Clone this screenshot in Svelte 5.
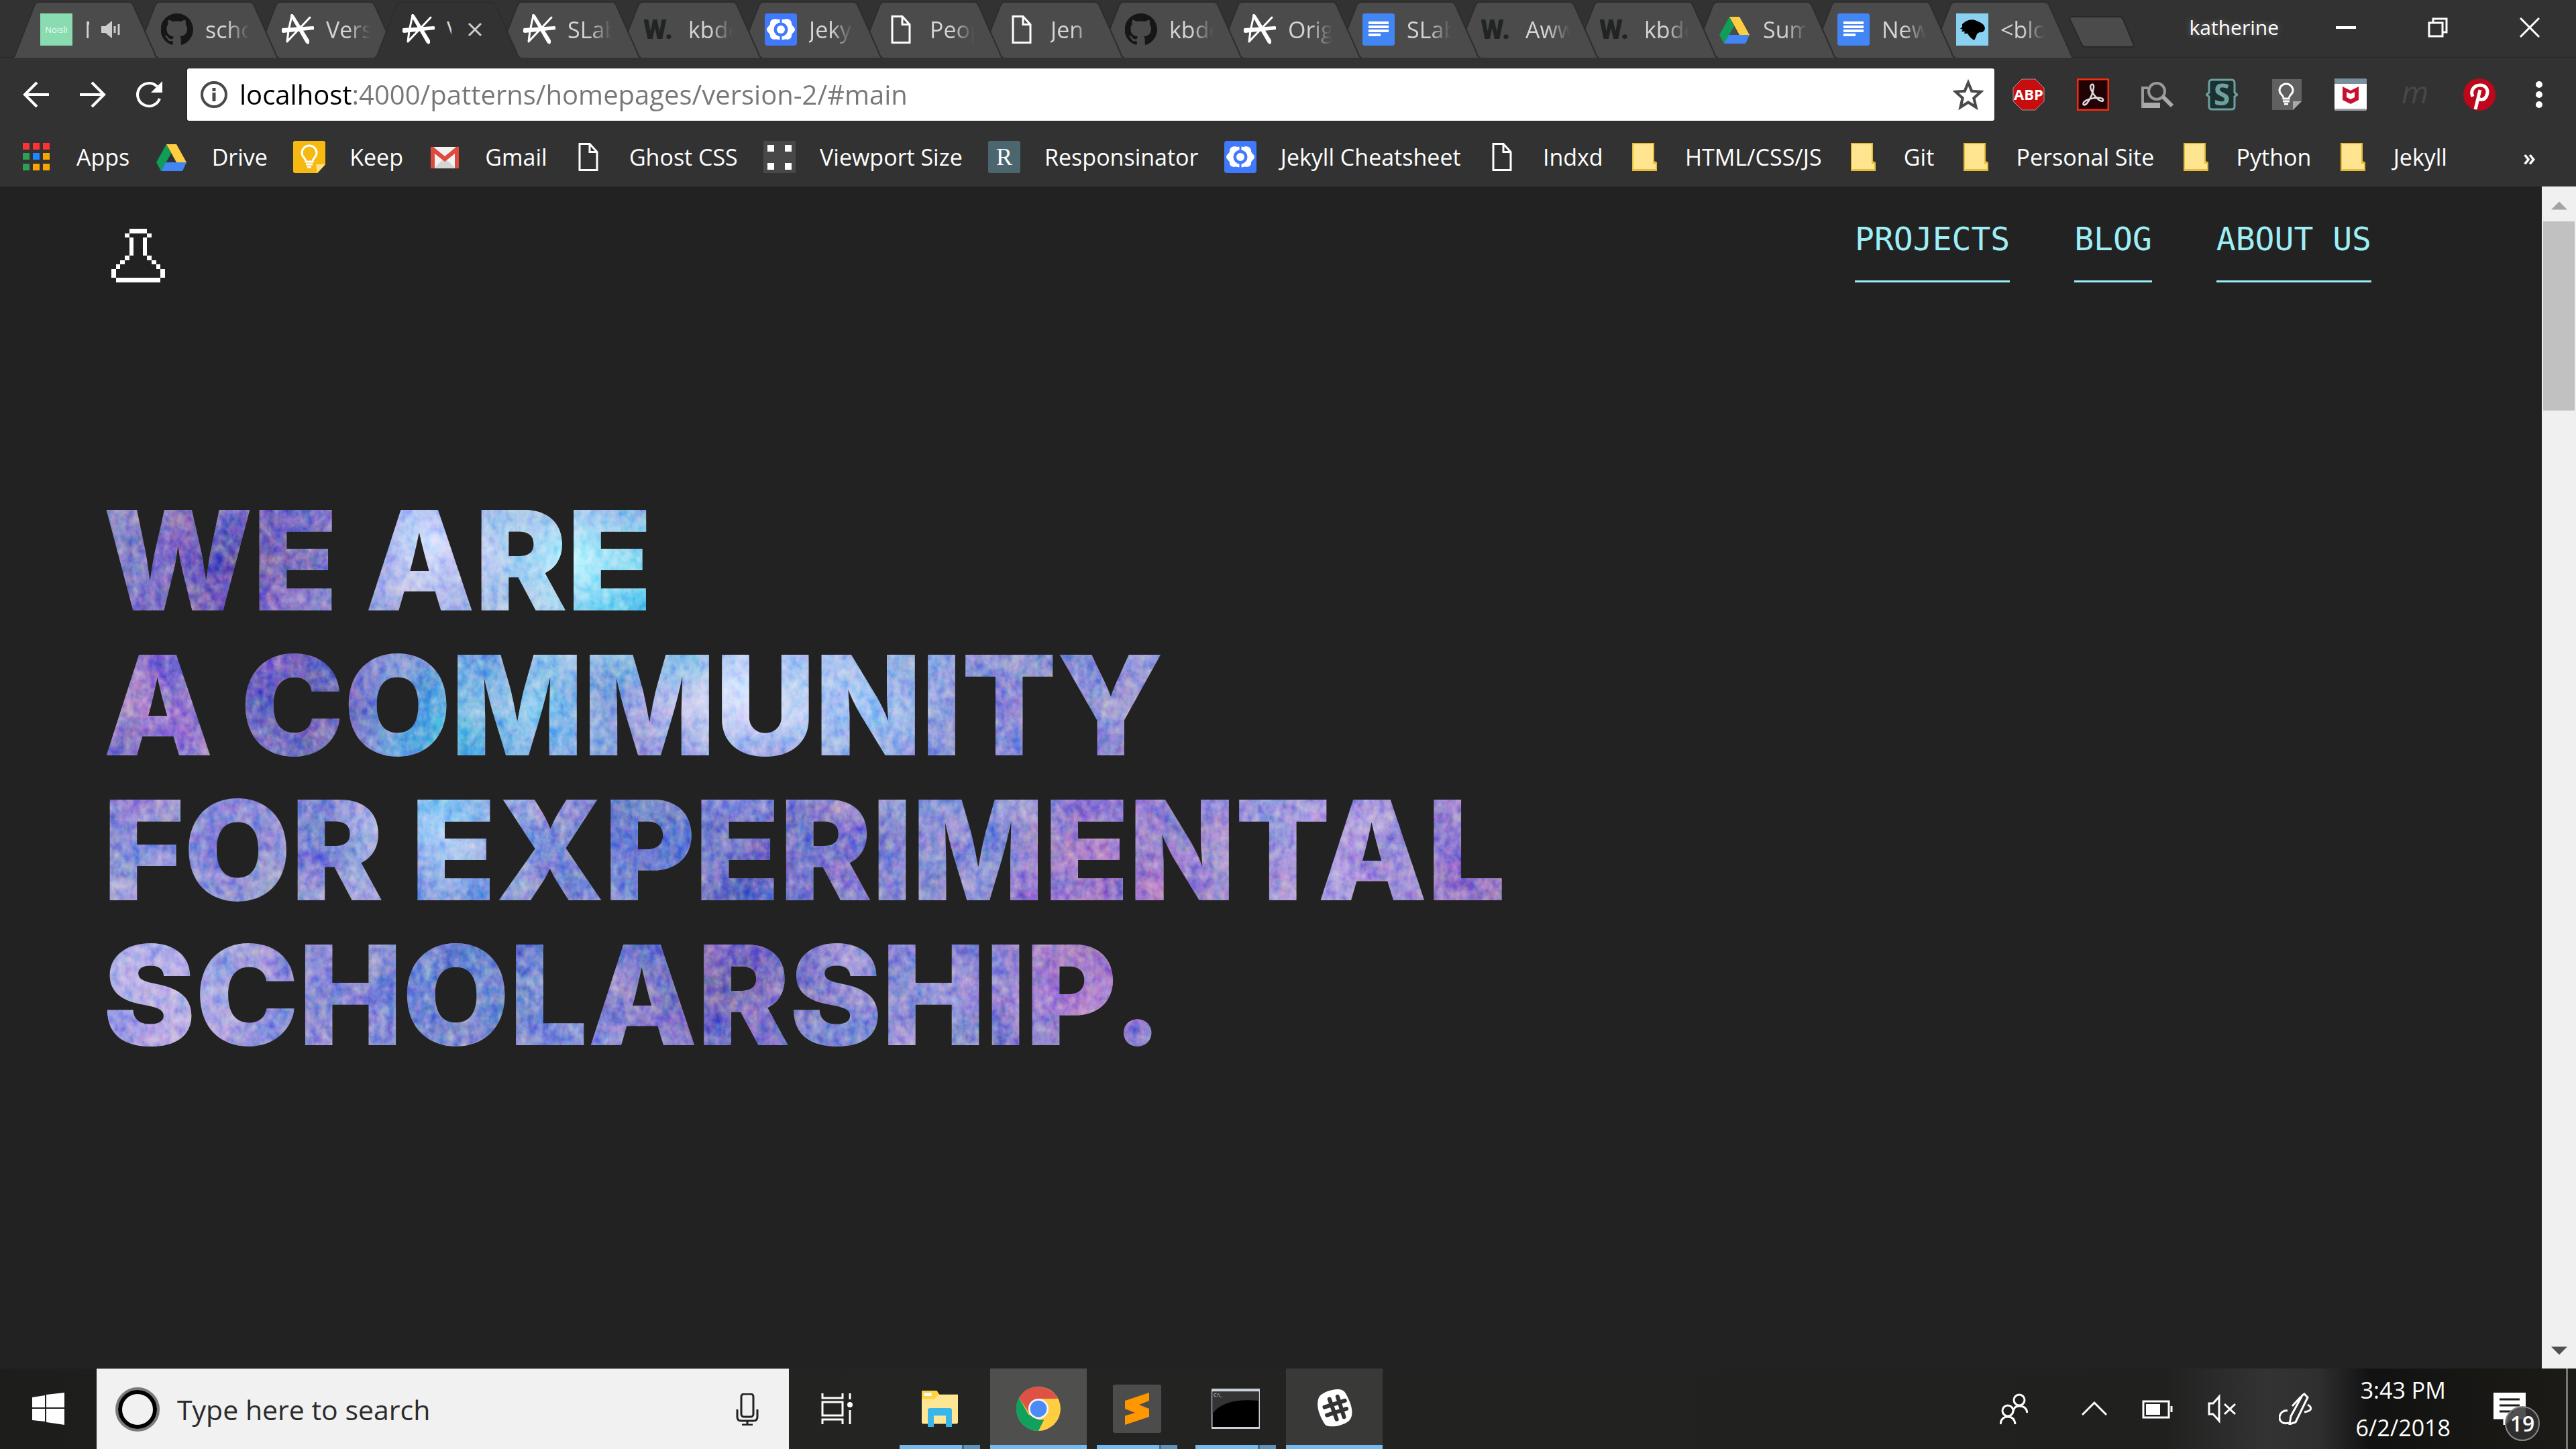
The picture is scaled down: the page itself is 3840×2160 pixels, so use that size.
<script>
  const tabs = [
    { icon: 'noisli', title: 'Noisli', audio: true },
    { icon: 'github', title: 'scholarslab' },
    { icon: 'star', title: 'Version 1' },
    { icon: 'star', title: 'Version 2', active: true },
    { icon: 'star', title: 'SLab' },
    { icon: 'w', title: 'kbdesign' },
    { icon: 'jekyll', title: 'Jekyll' },
    { icon: 'page', title: 'People' },
    { icon: 'page', title: 'Jen' },
    { icon: 'github', title: 'kbdesign' },
    { icon: 'star', title: 'Original' },
    { icon: 'docs', title: 'SLab' },
    { icon: 'w', title: 'Awwwards' },
    { icon: 'w', title: 'kbdesign' },
    { icon: 'drive', title: 'Summer' },
    { icon: 'docs', title: 'New' },
    { icon: 'lion', title: '<blockquote>' }
  ];
  const bookmarks = [
    ['apps', 'Apps'], ['drive', 'Drive'], ['keep', 'Keep'], ['gmail', 'Gmail'],
    ['page', 'Ghost CSS'], ['viewport', 'Viewport Size'], ['r', 'Responsinator'],
    ['jekyll', 'Jekyll Cheatsheet'], ['page', 'Indxd'], ['folder', 'HTML/CSS/JS'],
    ['folder', 'Git'], ['folder', 'Personal Site'], ['folder', 'Python'], ['folder', 'Jekyll']
  ];
  const extensions = [
    ['abp', 'Adblock Plus'], ['acrobat', 'Adobe Acrobat'], ['inspect', 'Page search'],
    ['stylish', 'Stylish'], ['keepgrey', 'Save to Keep'], ['mcafee', 'McAfee'],
    ['m', 'Momentum'], ['pinterest', 'Pinterest']
  ];
  const apps = [
    { icon: 'explorer', name: 'File Explorer', multi: true },
    { icon: 'chrome', name: 'Google Chrome', state: 'focused' },
    { icon: 'sublime', name: 'Sublime Text', multi: true },
    { icon: 'terminal', name: 'Command Prompt', multi: true },
    { icon: 'slack', name: 'Slack', state: 'lit' }
  ];
  const flask = [
    [4, 0, 4, 1], [3, 1, 1, 1], [8, 1, 1, 1], [4, 2, 1, 4], [7, 2, 1, 4], [3, 6, 1, 1], [8, 6, 1, 1],
    [2, 7, 1, 1], [9, 7, 1, 1], [1, 8, 1, 1], [10, 8, 1, 1], [0, 9, 1, 2], [11, 9, 1, 2], [1, 11, 10, 1]
  ];
  let address = $state('localhost:4000/patterns/homepages/version-2/#main');
  let query = $state('');
</script>

{#snippet icon(name)}
  <svg class="icon" viewBox="0 0 48 48" aria-hidden="true">
    {#if name === 'noisli'}
      <rect width="48" height="48" fill="#8adbb0" />
      <text x="24" y="29" text-anchor="middle" font-size="13" fill="#e4fff2">Noisli</text>
    {:else if name === 'github'}
      <path fill="#161616" d="M24 0a24 24 0 0 0-8 46.800c1.200.2 1.700-.5 1.700-1.200v-4.500c-6.700 1.500-8.100-2.900-8.100-2.900-1.100-2.800-2.700-3.500-2.700-3.500-2.200-1.500.2-1.500.2-1.500 2.400.2 3.700 2.500 3.700 2.500 2.100 3.700 5.600 2.600 7 2 .2-1.600.8-2.600 1.500-3.200-5.300-.6-10.900-2.700-10.900-11.900 0-2.600.9-4.800 2.500-6.500-.3-.6-1.100-3 .2-6.300 0 0 2-.7 6.600 2.500a23 23 0 0 1 12 0c4.600-3.200 6.600-2.500 6.600-2.500 1.300 3.300.5 5.700.2 6.300 1.500 1.700 2.500 3.900 2.500 6.500 0 9.200-5.600 11.200-11 11.800.9.800 1.700 2.300 1.700 4.500v6.700c0 .7.400 1.400 1.700 1.200A24 24 0 0 0 24 0z" />
    {:else if name === 'star'}
      <path fill="#fff" d="M0 23l1-1 46-3 1 1v4l-46 5-2-1z" />
      <path fill="#fff" d="M13 3l1-2h2l2 2 23 37 0 4-2 2-3-2L14 6z" />
      <path fill="none" stroke="#fff" stroke-width="3" stroke-linecap="round" stroke-linejoin="round" d="M42 6L8 42l2-16 5-23" />
    {:else if name === 'w'}
      <text x="-1" y="38" font-family="Roboto, sans-serif" font-size="40" font-weight="900" fill="#202423">W.</text>
    {:else if name === 'jekyll'}
      <rect width="48" height="48" rx="4" fill="#4079fb" />
      <path fill="#fff" d="M20 9c-7-2-12 1-12 6 0 4-5 5-5 9s5 5 5 9c0 5 5 7 12 5-5-3-8-9-8-14s3-12 8-15zm8 0c7-2 12 1 12 6 0 4 5 5 5 9s-5 5-5 9c0 5-5 7-12 5 5-3 8-9 8-14s-3-12-8-15z" />
      <circle cx="24" cy="24" r="13" fill="none" stroke="#fff" stroke-width="5" />
      <path stroke="#4079fb" stroke-width="3" d="M24 8v9m0 14v9" />
      <circle cx="24" cy="24" r="6" fill="#fff" />
    {:else if name === 'page'}
      <path fill="none" stroke="#fff" stroke-width="3" d="M10 4.500h15l11 12v27H10zM25 4.500v12h11" />
    {:else if name === 'docs'}
      <path fill="#4285f4" d="M2 0h44l2 2v44l-2 2H2l-2-2V2z" />
      <path stroke="#fff" stroke-width="4" d="M9 14h30M9 20h30M9 26h30M9 32h18" />
    {:else if name === 'drive'}
      <path fill="#0f9d58" d="M16 5l7 14L8 45 1 32z" />
      <path fill="#ffcd40" d="M16 5h15l15 27H31z" />
      <path fill="#4285f4" d="M15 32h31l-6 13H8z" />
    {:else if name === 'lion'}
      <rect width="48" height="48" fill="#8ad0f0" />
      <path d="M9 16l5-4q7-4 14-2l7 3q7 3 8 9-1 7-8 6-5 2-5 6l-3 6q-6-3-10-10l-5 0 1-3-5 0 2-3-4-1 3-3z" />
    {:else if name === 'apps'}
      <path fill="#f33" d="M4 3h10v10H4zm15 0h10v10H19zm15 0h10v10H34z" />
      <path fill="#2f9e57" d="M4 18h10v10H4zm0 16h10v10H4z" />
      <path fill="#1e88ff" d="M19 18h10v10H19z" />
      <path fill="#f9a602" d="M34 18h10v10H34zM19 34h10v10H19zm15 0h10v10H34z" />
    {:else if name === 'keep'}
      <path fill="#f5b912" d="M2 0h44l2 2v33L36 48H2l-2-2V2z" />
      <path fill="#ffe083" d="M34 35h14L36 48z" />
      <path fill="none" stroke="#fff" stroke-width="3" d="M19 31c0-6-6-6-6-13a11 11 0 0 1 22 0c0 7-6 7-6 13zM19 35h10m-8 4h6" />
    {:else if name === 'gmail'}
      <rect x="3" y="9" width="42" height="32" rx="2" fill="#f2f2f2" />
      <path fill="#d5d5d5" d="M8 41l16-16 16 16z" />
      <path fill="#dd4b3e" d="M3 11q0-3 4-2l17 14L41 9q4-1 4 2v28q0 2-2 2h-4V19L24 31 9 19v22H5q-2 0-2-2z" />
    {:else if name === 'viewport'}
      <rect width="48" height="48" fill="#484848" />
      <path fill="#fff" d="M6 6h10v10H6zm26 0h10v10H32zM6 33h10v10H6zm26 0h10v10H32z" />
    {:else if name === 'r'}
      <rect width="48" height="48" rx="3" fill="#4b666e" />
      <text x="24" y="36" text-anchor="middle" font-family="Liberation Serif, serif" font-size="36" fill="#fff">R</text>
    {:else if name === 'folder'}
      <path fill="#e5bd3a" d="M5 3h33v27l4 2v13H5z" />
      <path fill="#ffe590" d="M7 5h29v37H7zM36 34h4v8h-4z" />
    {:else if name === 'abp'}
      <path fill="#c70d0d" stroke="#999" d="M14 1h20l13 13v20L34 47H14L1 34V14z" />
      <text x="24" y="32" text-anchor="middle" font-size="22" font-weight="700" fill="#fff">ABP</text>
    {:else if name === 'acrobat'}
      <rect x="1" y="1" width="46" height="46" fill="#230206" stroke="#fa2b0c" stroke-width="3" />
      <path fill="none" stroke="#ddd" stroke-width="2.500" d="M22 9c5-2 3 8 0 16-4 9-9 16-12 14-3-4 7-9 16-10 8-1 14 0 13 4-3 3-9-3-13-8-5-7-8-14-4-16z" />
    {:else if name === 'inspect'}
      <path fill="none" stroke="#999" stroke-width="4" d="M10 14H2v28h24" />
      <path fill="#aaa" d="M2 36h26v8H2z" />
      <circle cx="23" cy="19" r="12" fill="#333" stroke="#999" stroke-width="4" />
      <path stroke="#aaa" stroke-width="6" d="M32 27l14 14" />
    {:else if name === 'stylish'}
      <path fill="#1c302f" stroke="#6fa09f" stroke-width="3" d="M9 2h30q4 0 4 5v14l4 3-4 3v14q0 5-4 5H9q-4 0-4-5V27l-4-3 4-3V7q0-5 4-5z" />
      <text x="24" y="40" text-anchor="middle" font-size="44" font-weight="700" fill="#6fa09f">S</text>
    {:else if name === 'keepgrey'}
      <path fill="#606060" d="M3 1h44v33L34 47H3z" />
      <path fill="#aaa" d="M34 34h13L34 47z" />
      <path fill="none" stroke="#fff" stroke-width="3" d="M20 30c0-6-6-6-6-12a10 10 0 0 1 20 0c0 6-6 6-6 12zM19 34h10m-8 4h6" />
    {:else if name === 'mcafee'}
      <rect width="48" height="48" rx="3" fill="#fff" />
      <path fill="#78909c" d="M2 0h44l2 2v6H0V2z" />
      <path fill="#9a9da3" d="M0 45h48l-2 3H2z" />
      <path fill="#c8102e" d="M12 12l12 6 12-6v20l-12 6-12-6zm6 8v8l6 3 6-3v-8l-6 3z" />
    {:else if name === 'm'}
      <text x="24" y="37" text-anchor="middle" font-size="46" font-style="italic" fill="#484848">m</text>
    {:else if name === 'pinterest'}
      <circle cx="24" cy="24" r="24" fill="#bd081c" />
      <path fill="none" stroke="#fff" stroke-width="5" d="M14 27c-4-9 2-17 11-17s13 7 10 15c-3 8-11 8-13 3" />
      <path stroke="#fff" stroke-width="5" d="M25 17l-7 29" />
    {:else if name === 'explorer'}
      <path fill="#fed242" d="M0 0h20l4 6v11H0z" />
      <path fill="#ffe694" d="M0 11h17l5-6h26v37q0 2-2 2H2q-2 0-2-2z" />
      <path fill="#fff" d="M3 3h10v4H3z" />
      <path fill="#38b6ea" d="M8 48V26q0-3 3-3h26q3 0 3 3v22h-8V33H16v15z" />
    {:else if name === 'chrome'}
      <circle cx="24" cy="24" r="24" fill="#ffcd40" />
      <path fill="#12a05d" d="M24 48A24 24 0 0 1 3 12l10 18 11 6h6z" />
      <path fill="#de5246" d="M3 12a24 24 0 0 1 42 1H24l-10 16z" />
      <circle cx="24" cy="24" r="11" fill="#f4f4f4" />
      <circle cx="24" cy="24" r="9" fill="#4c8bf5" />
    {:else if name === 'sublime'}
      <rect width="48" height="48" rx="2" fill="#4c4c4c" />
      <path fill="#ff9800" d="M36 8v8l-10 4 10 4v8L12 40v-9l10-3-10-4v-8z" />
    {:else if name === 'terminal'}
      <path fill="#c9d0d8" d="M0 4h48v40H0z" />
      <path d="M1 7h46v35H1z" />
      <path fill="#343434" d="M1 7h46v9Q12 13 1 29z" />
      <text x="2" y="12" font-size="5" fill="#ddd">C:\_</text>
    {:else if name === 'slack'}
      <path fill="#fff" d="M14 3q19-7 24 2c8 14 11 27 4 34-8 6-22 9-29 5C5 32 1 20 5 10q2-4 9-7z" />
      <path stroke="#333" stroke-width="5" stroke-linecap="round" d="M18 12l9 25M28 9l8 25M12 22l25-8M15 32l24-8" />
    {/if}
  </svg>
{/snippet}

<div class="window">
  <header class="chrome">
    <div class="strip">
      <div class="tabs" role="tablist">
        {#each tabs as tab, i}
          <button
            class="tab"
            class:active={tab.active}
            role="tab"
            aria-selected={!!tab.active}
            style:z-index={tab.active ? tabs.length + 1 : tabs.length - i}
          >
            <svg class="shape" viewBox="0 0 218 84" preserveAspectRatio="none" aria-hidden="true">
              <path d="M0 84q4 0 6-8L33 7q2-6 8-6h132q6 0 8 6l31 69q2 8 6 8" />
            </svg>
            {@render icon(tab.icon)}
            <span class="title" class:tiny={tab.audio || tab.active}>{tab.title}</span>
            {#if tab.audio}
              <svg class="mark" viewBox="0 0 28 28" aria-hidden="true">
                <path fill="#ccc" d="M0 9h6l10-8v26L6 19H0z" />
                <path stroke="#ccc" stroke-width="3" d="M20 9v10M26 6v16" />
              </svg>
            {:else if tab.active}
              <svg class="cross" viewBox="0 0 22 22" aria-hidden="true">
                <path stroke="#ccc" stroke-width="3" d="M2 2l18 18M20 2L2 20" />
              </svg>
            {/if}
          </button>
        {/each}
      </div>
      <button class="newtab" aria-label="New tab">
        <svg viewBox="0 0 100 48" aria-hidden="true">
          <path fill="#4b4b4b" stroke="#282828" stroke-width="2" d="M4 1h72q5 0 7 5l15 36q2 5-3 5H26q-5 0-7-5L2 6Q0 1 4 1z" />
        </svg>
      </button>
      <div class="controls">
        <button class="user">katherine</button>
        <button class="ctl" aria-label="Minimize"><svg viewBox="0 0 30 30"><path d="M0 15h30" stroke-width="4" /></svg></button>
        <button class="ctl" aria-label="Restore"><svg viewBox="0 0 30 30"><path d="M2 8h20v20H2zM8 8V2h20v20h-6" stroke-width="3" /></svg></button>
        <button class="ctl" aria-label="Close"><svg viewBox="0 0 30 30"><path d="M1 1l28 28M29 1L1 29" stroke-width="3" /></svg></button>
      </div>
    </div>

    <div class="toolbar">
      <button class="nav" aria-label="Back"><svg viewBox="0 0 40 40"><path d="M39 20H3M21 2L3 20l18 18" /></svg></button>
      <button class="nav" aria-label="Forward"><svg viewBox="0 0 40 40"><path d="M1 20h36M19 2l18 18-18 18" /></svg></button>
      <button class="nav" aria-label="Reload"><svg viewBox="0 0 40 40"><path d="M36 26A17 17 0 1 1 32 8" /><path class="solid" d="M40 0v17H23z" /></svg></button>
      <div class="omnibox">
        <button class="inbox" aria-label="Site information">
          <svg viewBox="0 0 40 40"><circle cx="20" cy="20" r="18" fill="none" stroke="#4a4a4a" stroke-width="4" /><path stroke="#4a4a4a" stroke-width="5" d="M20 17v13M20 10v5" /></svg>
        </button>
        <input class="address" aria-label="Address" bind:value={address} />
        <button class="inbox" aria-label="Bookmark this page">
          <svg class="fav" viewBox="0 0 44 44"><path fill="none" stroke="#4a4a4a" stroke-width="4" d="M22 5l5 12 13 1-10 9 3 13-11-7-11 7 3-13-10-9 13-1z" /></svg>
        </button>
      </div>
      <div class="extensions">
        {#each extensions as [name, label]}
          <button aria-label={label}>{@render icon(name)}</button>
        {/each}
      </div>
      <button class="menu" aria-label="Menu"><svg viewBox="0 0 10 40"><circle cx="5" cy="5" r="5" /><circle cx="5" cy="20" r="5" /><circle cx="5" cy="35" r="5" /></svg></button>
    </div>

    <nav class="bookmarks" aria-label="Bookmarks">
      <div class="links">
        {#each bookmarks as [name, label]}
          <a href="#main">{@render icon(name)}<span>{label}</span></a>
        {/each}
      </div>
      <button class="more" aria-label="More bookmarks">»</button>
    </nav>
  </header>

  <div class="viewport">
    <main id="main">
      <div class="top">
        <a class="logo" href="#main" aria-label="Home">
          <svg viewBox="0 0 12 12" shape-rendering="crispEdges">
            {#each flask as [x, y, w, h]}
              <rect {x} {y} width={w} height={h} fill="#fff" />
            {/each}
          </svg>
        </a>
        <nav class="site" aria-label="Site">
          <a href="#projects">PROJECTS</a>
          <a href="#blog">BLOG</a>
          <a href="#about">ABOUT US</a>
        </nav>
      </div>
      <h1>WE ARE<br />A COMMUNITY<br />FOR EXPERIMENTAL<br />SCHOLARSHIP.</h1>
    </main>
    <div class="scroll" aria-hidden="true">
      <svg viewBox="0 0 24 12"><path fill="#a3a3a3" d="M12 0l12 12H0z" /></svg>
      <div class="track"><div class="thumb"></div></div>
      <svg viewBox="0 0 24 12"><path fill="#505050" d="M0 0h24L12 12z" /></svg>
    </div>
  </div>

  <footer class="taskbar">
    <button class="start" aria-label="Start">
      <svg viewBox="0 0 48 48"><path fill="#fff" d="M0 7l19-3v18H0zM21 3l27-3v22H21zM0 24h19v19L0 41zM21 24h27v24l-27-4z" /></svg>
    </button>
    <label class="search">
      <svg class="cortana" viewBox="0 0 66 66" aria-hidden="true"><circle cx="33" cy="33" r="31" fill="none" stroke="#7a7a7a" stroke-width="4" /><circle cx="33" cy="33" r="26" fill="none" stroke="#000" stroke-width="6" /></svg>
      <input placeholder="Type here to search" aria-label="Type here to search" bind:value={query} />
      <svg class="mic" viewBox="0 0 34 48" aria-hidden="true"><rect x="8" y="1" width="18" height="34" rx="4" /><path d="M2 24v11q0 6 6 6h18q6 0 6-6V24M17 41v6M9 47h16" /></svg>
    </label>
    <button class="view" aria-label="Task view">
      <svg viewBox="0 0 48 46"><path d="M2 0v7h30V0M2 13h30v20H2zM2 46v-7h30v7M43 0v9M43 25v21" /><circle cx="43" cy="17" r="4" fill="#fff" stroke="none" /></svg>
    </button>
    <div class="apps">
      {#each apps as app}
        <button class="app {app.state ?? ''} {app.icon}" class:multi={app.multi} aria-label={app.name}>{@render icon(app.icon)}</button>
      {/each}
    </div>
    <div class="tray">
      <button aria-label="People"><svg class="w42" viewBox="0 0 42 48"><circle cx="29" cy="11" r="8" /><path d="M20 28q1-8 9-8 11 0 12 10" /><circle cx="12" cy="27" r="8" /><path d="M1 47q1-11 11-11t11 11" /></svg></button>
      <button aria-label="Hidden icons"><svg class="w38" viewBox="0 0 38 48"><path d="M1 33l18-18 18 18" /></svg></button>
      <button aria-label="Battery"><svg class="w46" viewBox="0 0 46 48"><path d="M2 13h38v24H2zM44 20v9" /><path class="fill" d="M6 17h21v16H6z" /></svg></button>
      <button aria-label="Volume muted"><svg class="w42" viewBox="0 0 42 48"><path d="M2 16h6l9-10v36L8 32H2zM25 17l16 15M41 17L25 32" /></svg></button>
      <button aria-label="Pen workspace"><svg class="w50" viewBox="0 0 50 48"><path d="M15 45c-12 3-17-6-12-14q4-5 10-4M38 2l5 5-18 37-9 3 2-12 17-31zM20 20L33 6M43 18c7 4 7 9-5 11" /></svg></button>
      <button class="clock"><span>3:43 PM</span><span>6/2/2018</span></button>
      <button class="notes" aria-label="19 notifications">
        <svg viewBox="0 0 48 48"><path fill="#fff" d="M0 0h48v38H26L16 48V38H0z" /><path stroke="#1b1b19" stroke-width="3" d="M9 10h30M9 19h30M9 28h20" /></svg>
        <span class="badge">19</span>
      </button>
    </div>
  </footer>

  <svg class="defs" aria-hidden="true">
    <filter id="felt" x="0" y="0" width="100%" height="100%" color-interpolation-filters="sRGB">
      <feTurbulence type="fractalNoise" baseFrequency="0.014" numOctaves="2" seed="8" result="wide" />
      <feColorMatrix in="wide" type="matrix" values="0.900 0 0 0 0.080  0.500 0.400 0 0 0.060  0 0 0.400 0 0.280  0 0 0 0 1" result="clouds" />
      <feTurbulence type="fractalNoise" baseFrequency="0.09 0.07" numOctaves="4" seed="3" result="fine" />
      <feColorMatrix in="fine" type="matrix" values="1.100 0 0 0 0  0.700 0.500 0 0 -0.050  0 0 0.600 0 0.170  0 0 0 0 1" result="grain" />
      <feBlend in="clouds" in2="SourceGraphic" mode="soft-light" result="a" />
      <feBlend in="grain" in2="a" mode="soft-light" result="b" />
      <feComposite in="b" in2="SourceGraphic" operator="in" />
    </filter>
  </svg>
</div>

<style>
  :global(body) { margin: 0; background: #222; }
  .window { display: flex; flex-direction: column; min-height: 100vh; font: 34px/48px 'Open Sans', 'Noto Sans', sans-serif; color: #fff; }
  button { padding: 0; border: 0; background: none; color: inherit; font: inherit; display: flex; align-items: center; justify-content: center; }
  a { color: inherit; text-decoration: none; }
  svg { display: block; flex: none; }
  .icon { width: 48px; height: 48px; }

  .chrome { background: #323232; }
  .strip { display: flex; align-items: flex-end; height: 86px; box-shadow: inset 0 -1px #262626; }
  .tabs { display: flex; padding-left: 18px; isolation: isolate; }
  .tab { position: relative; justify-content: flex-start; width: 218px; height: 84px; margin-right: -38px; padding: 0 42px; text-align: left; color: #d4d4d4; isolation: isolate; }
  .tab:nth-child(n + 9) { margin-right: -41px; }
  .shape { position: absolute; inset: 0; width: 100%; height: 100%; z-index: -1; fill: #4b4b4b; stroke: #2d2d2d; stroke-width: 2; }
  .active .shape { fill: #323232; }
  .title { flex: none; width: 66px; margin-left: 18px; overflow: hidden; white-space: nowrap; mask-image: linear-gradient(90deg, #000 50%, transparent); }
  .title.tiny { width: 7px; mask-image: none; }
  .mark { width: 28px; height: 28px; margin-left: 18px; }
  .cross { width: 22px; height: 22px; margin-left: 24px; }
  .newtab { align-self: center; margin-left: 33px; padding-top: 8px; }
  .newtab svg { width: 98px; height: 47px; }
  .controls { display: flex; align-items: center; align-self: stretch; margin-left: auto; padding: 0 54px 4px 0; }
  .user { margin-right: 85px; font-size: 30px; text-shadow: 0 0 8px #777; }
  .ctl { width: 30px; margin-left: 107px; }
  .user + .ctl { margin-left: 0; }
  .ctl svg { width: 30px; height: 30px; fill: none; stroke: #fff; }

  .toolbar { display: flex; align-items: center; padding: 16px 50px 0 34px; }
  .nav { margin-right: 44px; }
  .nav svg { width: 40px; height: 40px; fill: none; stroke: #fff; stroke-width: 4; }
  .nav .solid { fill: #fff; stroke: none; }
  .omnibox { display: flex; align-items: center; flex: 1; height: 78px; margin-left: -7px; padding: 0 16px 0 20px; background: #fff; border-radius: 3px; box-shadow: 0 0 0 1px #222; }
  .inbox svg { width: 40px; height: 40px; }
  .inbox .fav { width: 46px; height: 46px; }
  .address { flex: 1; min-width: 0; height: 60px; margin-left: 18px; padding: 0; border: 0; outline: 0; font: 40px/60px 'Open Sans', 'Noto Sans', sans-serif; color: transparent; caret-color: #000; background: linear-gradient(90deg, #000 169px, #777 169px); background-clip: text; -webkit-background-clip: text; }
  .extensions { display: flex; gap: 48px; margin-left: 27px; }
  .menu { margin-left: 60px; }
  .menu svg { width: 10px; height: 40px; fill: #fff; }

  .bookmarks { display: flex; align-items: center; justify-content: space-between; height: 98px; padding: 10px 60px 0 30px; box-sizing: border-box; }
  .links { display: flex; justify-content: space-between; flex: 1; max-width: 3618px; }
  .links a { display: flex; align-items: center; gap: 36px; white-space: nowrap; }
  .more { margin-left: 100px; font-weight: 600; }

  .viewport { display: flex; flex: 1; background: #222; }
  main { flex: 1; min-width: 0; }
  .top { display: flex; justify-content: space-between; padding: 50px 254px 0 166px; }
  .logo { margin-top: 13px; }
  .logo svg { width: 80px; height: 80px; }
  .site { display: flex; gap: 96px; font: 48px/56px 'DejaVu Sans Mono', monospace; color: #9eeef5; }
  .site a { padding-bottom: 31px; border-bottom: 3px solid #9eeef5; }
  h1 {
    width: max-content; margin: 306px 0 0 154px; font: 900 206px/216px Inter, 'Open Sans', sans-serif; color: transparent;
    background:
      radial-gradient(circle at 190px 100px, #6550b8, transparent 220px),
      radial-gradient(circle at 700px 110px, #b5f4ff, transparent 190px),
      radial-gradient(circle at 490px 80px, #cfdcff, transparent 170px),
      radial-gradient(circle at 810px 150px, #35bde8, transparent 180px),
      radial-gradient(circle at 60px 320px, #9a6fd0, transparent 190px),
      radial-gradient(circle at 280px 320px, #5f52bc, transparent 170px),
      radial-gradient(circle at 500px 350px, #46b4e4, transparent 140px),
      radial-gradient(circle at 640px 330px, #86ccf2, transparent 170px),
      radial-gradient(circle at 950px 300px, #d2e4ff, transparent 210px),
      radial-gradient(circle at 1130px 320px, #8ec2f4, transparent 180px),
      radial-gradient(circle at 500px 500px, #94ccf8, transparent 170px),
      radial-gradient(circle at 820px 520px, #5878d2, transparent 180px),
      radial-gradient(circle at 1000px 540px, #6a62c8, transparent 200px),
      radial-gradient(circle at 1520px 580px, #a070cc, transparent 200px),
      radial-gradient(circle at 1830px 530px, #b49ae4, transparent 180px),
      radial-gradient(circle at 2040px 580px, #946aca, transparent 180px),
      radial-gradient(circle at 80px 740px, #b8b0ec, transparent 220px),
      radial-gradient(circle at 560px 730px, #5a80d4, transparent 200px),
      radial-gradient(circle at 920px 740px, #6c5cc0, transparent 200px),
      radial-gradient(circle at 1480px 740px, #a470ce, transparent 220px),
      #888cda;
    background-clip: text; -webkit-background-clip: text;
    filter: url(#felt);
  }
  .defs { position: absolute; width: 0; height: 0; }

  .scroll { display: flex; flex-direction: column; align-items: center; width: 51px; padding: 22px 0 20px; box-sizing: border-box; background: #f0f0f0; }
  .scroll svg { width: 24px; height: 13px; }
  .track { flex: 1; width: 47px; padding: 17px 0; }
  .thumb { height: 17%; background: #c1c1c1; }

  .taskbar { display: flex; height: 120px; background: linear-gradient(90deg, #1d1d1b, #242423 35%, #20211f 84%, #333 88%, #2f2f2f 90%, #111211 92%, #1d1b17); }
  .start { width: 144px; }
  .start svg { width: 48px; height: 48px; }
  .search { display: flex; align-items: center; width: 1032px; padding: 0 45px 0 28px; box-sizing: border-box; background: #f1f1f1; border-top: 1px solid #bbb; }
  .cortana { width: 66px; height: 66px; }
  .search input { flex: 1; min-width: 0; height: 80px; margin-left: 26px; padding: 0; border: 0; outline: 0; background: none; font: 41px/60px 'Open Sans', 'Noto Sans', sans-serif; color: #222; }
  .search input::placeholder { color: #2b2b2b; opacity: 1; }
  .mic { width: 34px; height: 48px; fill: none; stroke: #222; stroke-width: 3; }
  .view { width: 144px; }
  .view svg { width: 48px; height: 46px; fill: none; stroke: #fff; stroke-width: 3; }
  .apps { display: flex; gap: 3px; margin-left: 9px; }
  .app { position: relative; width: 144px; }
  .app::after { content: ''; position: absolute; bottom: 0; left: 0; right: 0; height: 6px; background: #76b9ed; }
  .multi::after { left: 12px; right: 12px; background: linear-gradient(90deg, #76b9ed 93px, #43698a 93px 96px, #5f92bd 96px); }
  .app.focused { background: #4f4f4e; }
  .app.lit { background: #393938; }
  .app .icon { width: 66px; height: 66px; }
  .explorer .icon { height: 54px; }
  .sublime .icon, .terminal .icon { width: 72px; height: 72px; }
  .slack .icon { width: 58px; height: 58px; }

  .tray { display: flex; align-items: center; margin-left: auto; border-right: 3px solid #777; margin-right: 12px; padding-right: 60px; }
  .tray svg { height: 48px; fill: none; stroke: #fff; stroke-width: 3; }
  .tray .fill { fill: #fff; stroke: none; }
  .w42 { width: 42px; }
  .w38 { width: 38px; }
  .w46 { width: 46px; }
  .w50 { width: 50px; }
  .tray button + button { margin-left: 64px; }
  .tray button:nth-child(2) { margin-left: 80px; }
  .tray button:nth-child(3), .tray button:nth-child(4) { margin-left: 52px; }
  .tray .clock { flex-direction: column; line-height: 56px; }
  .notes { position: relative; }
  .notes svg { width: 48px; }
  .badge { position: absolute; left: 17px; top: 20px; width: 52px; height: 52px; border: 2px solid #888; border-radius: 50%; background: rgb(50 50 50 / 85%); font: 600 32px/48px 'Open Sans', sans-serif; box-sizing: border-box; text-align: center; }
</style>
